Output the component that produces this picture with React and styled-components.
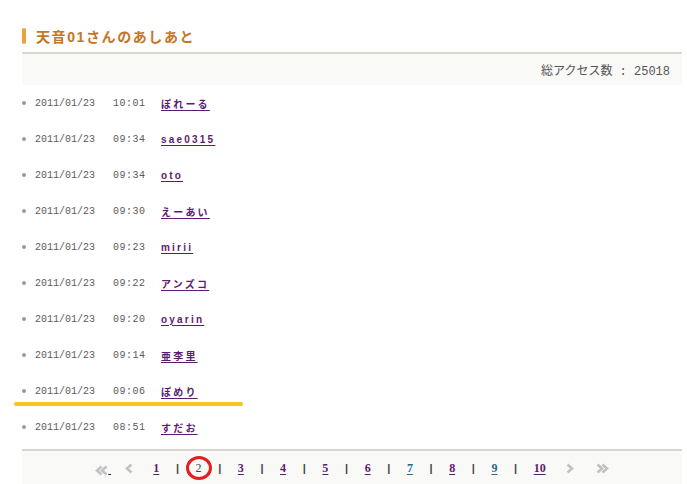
import React from 'react';
import styled, { createGlobalStyle } from 'styled-components';

const GlobalStyle = createGlobalStyle`
  html, body {
    margin: 0;
    padding: 0;
    background: #ffffff;
  }
  body {
    font-family: 'Liberation Sans', 'Noto Sans CJK JP', sans-serif;
  }
`;

const Page = styled.div`
  width: 660px;
  padding: 20px 0 0 22px;
`;

const Heading = styled.h2`
  display: flex;
  align-items: center;
  gap: 10px;

  margin: 0;
  height: 32px;
  border-bottom: 2px solid #ddd5c9;

  font-family: 'Liberation Sans', 'Noto Sans CJK JP', sans-serif;
  font-size: 14px;
  font-weight: bold;
  letter-spacing: 1.6px;
  color: #c47628;

  &::before {
    content: '';
    display: block;
    width: 4px;
    height: 16px;
    border-radius: 2px;
    background: #f0a234;
  }
`;

const CountBar = styled.div`
  display: flex;
  justify-content: flex-end;
  align-items: center;

  height: 31px;
  padding-right: 12px;
  background: #f9f9f8;

  font-family: 'Liberation Mono', 'Noto Sans CJK JP', monospace;
  font-size: 12px;
  color: #555;
`;

const List = styled.ul`
  margin: 0;
  padding: 0;
  list-style: none;
`;

const Row = styled.li`
  position: relative;
  display: flex;
  align-items: center;
  height: 36px;

  font-family: 'Liberation Mono', monospace;
  font-size: 10px;
  color: #5a5a5a;

  &::before {
    content: '';
    width: 4px;
    height: 4px;
    margin: 0 9px 0 0;
    border-radius: 50%;
    background: #9a9a9a;
  }
`;

const DateCell = styled.span`
  width: 78px;
`;

const TimeCell = styled.span`
  width: 48px;
  letter-spacing: 0.5px;
`;

const NameLink = styled.a`
  font-family: 'Liberation Sans', 'Noto Sans CJK JP', sans-serif;
  font-size: 10px;
  font-weight: bold;
  letter-spacing: 2.2px;
  color: #5b1d6f;
  text-decoration: underline;
  text-underline-offset: 2px;
`;

const Highlight = styled.span`
  position: absolute;
  left: -8px;
  top: 29px;
  width: 229px;
  height: 4px;
  border-radius: 2px;
  background: #f7c51c;
`;

const Pager = styled.div`
  display: flex;
  justify-content: center;
  align-items: center;
  gap: 16.6px;

  margin-top: 4px;
  height: 34px;
  border-top: 2px solid #ddd5c9;
  background: #f9f9f8;

  font-family: 'Liberation Serif', serif;
  font-size: 12px;
  font-weight: bold;
  color: #555;
`;

const PageLink = styled.a`
  color: ${({ $fresh }) => ($fresh ? '#1f6c8e' : '#5c1a72')};
  text-decoration: underline;
  text-underline-offset: 2px;
`;

const Current = styled.span`
  position: relative;
  font-weight: normal;
  color: #444;

  &::after {
    content: '';
    position: absolute;
    left: 50%;
    top: 50%;
    width: 20px;
    height: 18px;
    transform: translate(-50%, -50%);
    border: 3px solid #e31e1e;
    border-radius: 50%;
  }
`;

const Sep = styled.span`
  color: #444;
  font-family: 'Liberation Sans', sans-serif;
  font-size: 11px;
`;

const Arrow = styled.span`
  display: inline-flex;
  align-items: flex-end;
  margin: ${({ $m }) => $m || '0'};
  color: #5c1a72;
`;

const Chevrons = ({ count = 1, flip = false }) => (
  <svg
    width={count === 2 ? 13 : 8}
    height="11"
    viewBox={count === 2 ? '0 0 13 11' : '0 0 8 11'}
    style={{ transform: flip ? 'scaleX(-1)' : undefined }}
  >
    <path d="M6.5 1.5 L2 5.5 L6.5 9.5" fill="none" stroke="#c2c2c2" strokeWidth="2.6" />
    {count === 2 && (
      <path d="M11.5 1.5 L7 5.5 L11.5 9.5" fill="none" stroke="#c2c2c2" strokeWidth="2.6" />
    )}
  </svg>
);

const rows = [
  ['10:01', 'ぽれーる'],
  ['09:34', 'sae0315'],
  ['09:34', 'oto'],
  ['09:30', 'えーあい'],
  ['09:23', 'mirii'],
  ['09:22', 'アンズコ'],
  ['09:20', 'oyarin'],
  ['09:14', '亜李里'],
  ['09:06', 'ぽめり'],
  ['08:51', 'すだお'],
];

const pages = [1, 2, 3, 4, 5, 6, 7, 8, 9, 10];
const freshPages = [7, 9];

export default function App() {
  return (
    <>
      <GlobalStyle />
      <Page>
        <Heading>天音01さんのあしあと</Heading>
        <CountBar>総アクセス数 : 25018</CountBar>
        <List>
          {rows.map(([time, name], i) => (
            <Row key={i}>
              <DateCell>2011/01/23</DateCell>
              <TimeCell>{time}</TimeCell>
              <NameLink href="#">{name}</NameLink>
              {i === 8 && <Highlight />}
            </Row>
          ))}
        </List>
        <Pager>
          <Arrow $m="0 -3px 0 0">
            <Chevrons count={2} />
            <PageLink href="#">&nbsp;</PageLink>
          </Arrow>
          <Arrow $m="0 4px 0 0">
            <Chevrons />
          </Arrow>
          {pages.map((p, i) => (
            <React.Fragment key={p}>
              {i > 0 && <Sep>|</Sep>}
              {p === 2 ? (
                <Current>{p}</Current>
              ) : (
                <PageLink href="#" $fresh={freshPages.includes(p)}>
                  {p}
                </PageLink>
              )}
            </React.Fragment>
          ))}
          <Arrow $m="0 5px 0 4px">
            <Chevrons flip />
          </Arrow>
          <Arrow>
            <Chevrons count={2} flip />
          </Arrow>
        </Pager>
      </Page>
    </>
  );
}
